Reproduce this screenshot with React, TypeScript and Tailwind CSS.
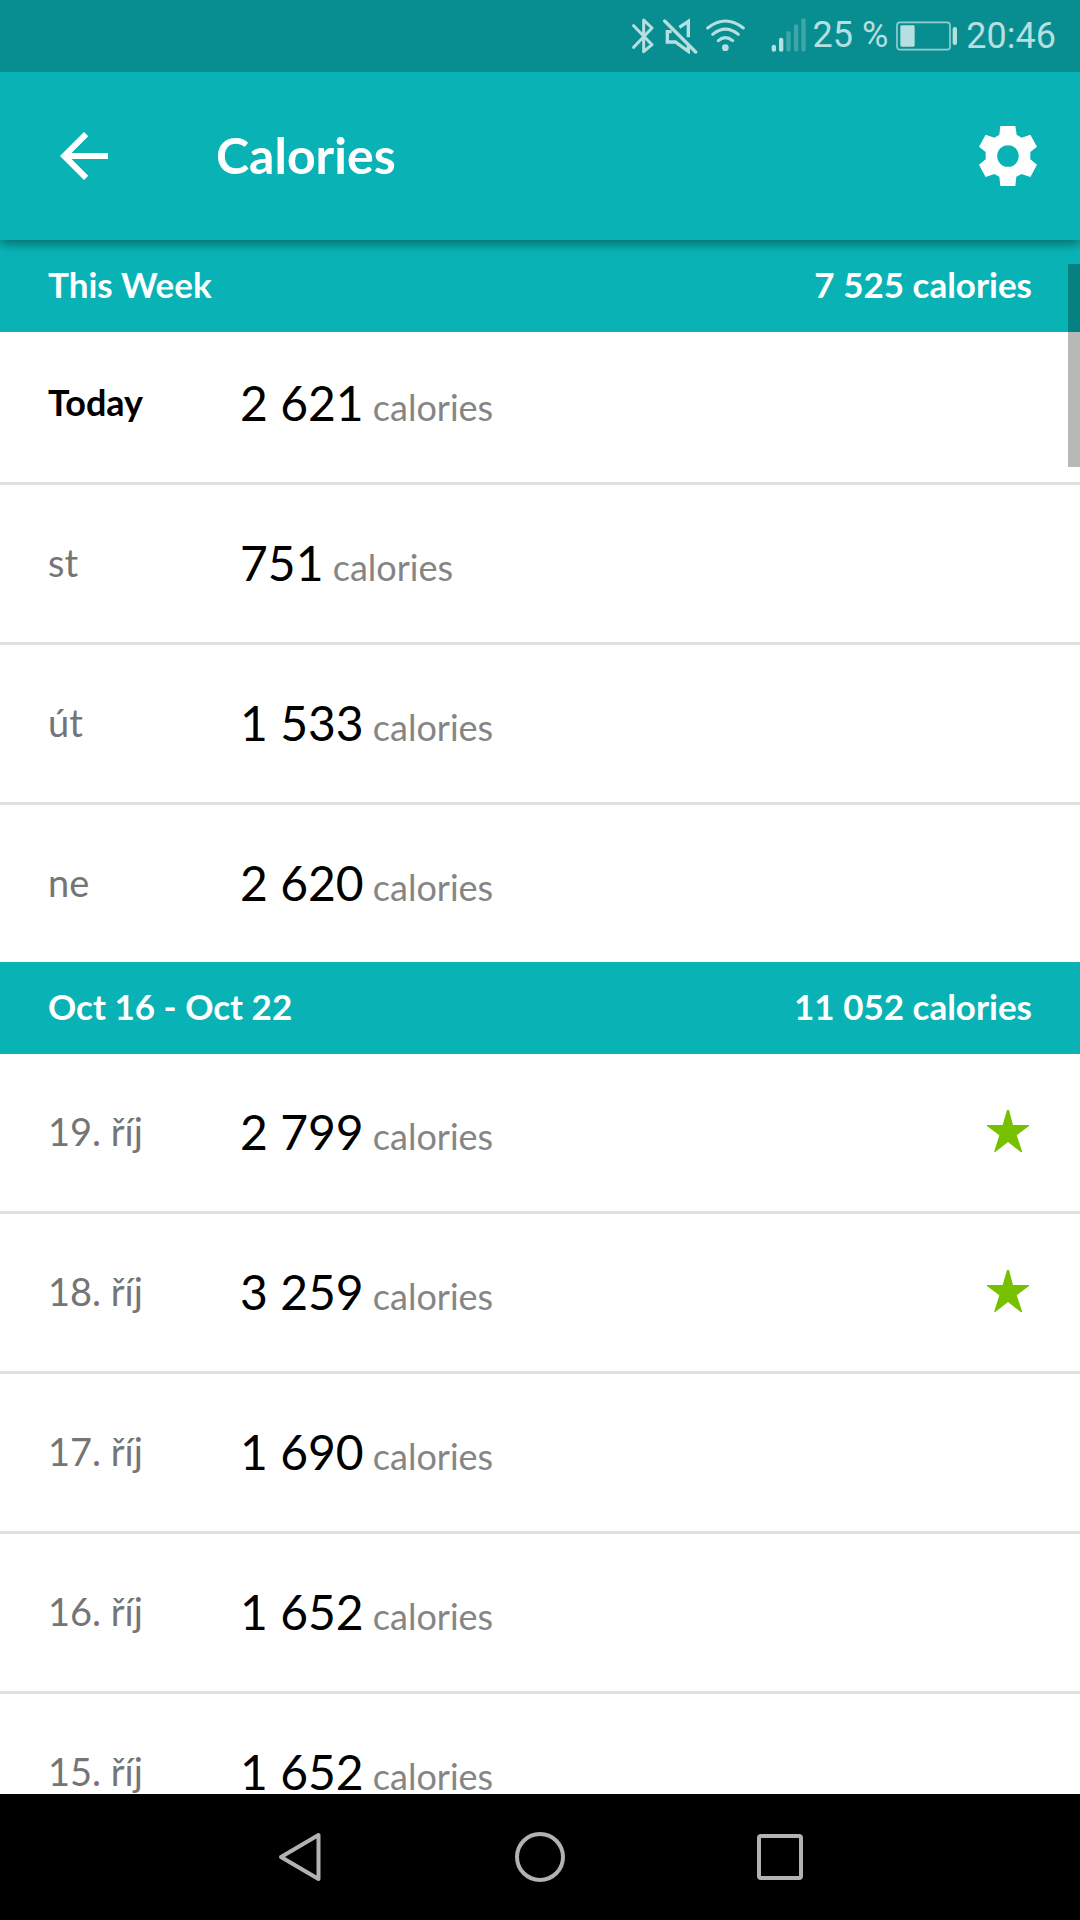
type Day = { label: string; value: string; today?: boolean; goal?: boolean };

type Week = { title: string; total: string; days: Day[] };

const WEEKS: Week[] = [
  {
    title: "This Week",
    total: "7 525 calories",
    days: [
      { label: "Today", value: "2 621", today: true },
      { label: "st", value: "751" },
      { label: "út", value: "1 533" },
      { label: "ne", value: "2 620" },
    ],
  },
  {
    title: "Oct 16 - Oct 22",
    total: "11 052 calories",
    days: [
      { label: "19. říj", value: "2 799", goal: true },
      { label: "18. říj", value: "3 259", goal: true },
      { label: "17. říj", value: "1 690" },
      { label: "16. říj", value: "1 652" },
      { label: "15. říj", value: "1 652" },
    ],
  },
];

function StatusBar() {
  return (
    <div className="relative z-30 flex h-[72px] shrink-0 items-center justify-end bg-[#088e90] pr-6 font-['Roboto',sans-serif] text-4xl text-[#b5dfe0]">
      <svg className="h-9 w-[22px]" viewBox="0 0 66 108" fill="none" stroke="currentColor" strokeWidth="9" strokeLinejoin="round" strokeLinecap="round">
        <path d="M5 23 60 80 35 101V6L60 30 5 88" />
      </svg>
      <svg className="ml-2 h-9 w-9" viewBox="0 0 108 108" fill="none" stroke="currentColor" strokeWidth="10">
        <path d="M8 9 101 102" strokeLinecap="round" />
        <path d="M52 28 79 10V58M29 41H16V72H40L79 100V80" />
      </svg>
      <svg className="ml-2 h-9 w-[39px]" viewBox="0 0 117 108" fill="none" stroke="currentColor" strokeWidth="9" strokeLinecap="round">
        <path d="M5 30Q58-12 112 30M20 49Q58 18 97 49M37 68Q58 50 80 68" />
        <circle cx="58" cy="89" r="10" fill="currentColor" stroke="none" />
      </svg>
      <svg className="ml-[26px] h-9 w-9" viewBox="0 0 108 108" fill="currentColor">
        <rect x="2" y="80" width="13" height="21" rx="6" />
        <rect x="24" y="59" width="13" height="42" rx="6" />
        <g opacity="0.3">
          <rect x="46" y="39" width="13" height="62" rx="6" />
          <rect x="69" y="19" width="13" height="82" rx="6" />
          <rect x="91" y="1" width="13" height="100" rx="6" />
        </g>
      </svg>
      <span className="ml-1.5 pb-0.5">25 %</span>
      <svg className="ml-2 h-[30px] w-[62px]" viewBox="0 0 186 90" fill="currentColor">
        <rect x="3" y="4" width="159" height="82" rx="9" fill="none" stroke="currentColor" strokeWidth="5" opacity="0.8" />
        <rect x="13" y="13" width="43" height="64" rx="4" />
        <rect x="170" y="18" width="13" height="54" rx="6" />
      </svg>
      <span className="ml-2">20:46</span>
    </div>
  );
}

function AppBar() {
  return (
    <header className="relative z-20 flex h-[168px] shrink-0 items-center bg-[#09b3b5] pr-[42px] pl-[60px] text-white shadow-[0_4px_10px_rgba(0,0,0,0.4)]">
      <button type="button" aria-label="Back">
        <svg className="size-12" viewBox="4 4 16 16" fill="currentColor">
          <path d="M20 11H7.83l5.59-5.59L12 4l-8 8 8 8 1.41-1.41L7.83 13H20v-2z" />
        </svg>
      </button>
      <h1 className="ml-[108px] flex-1 pb-0.5 text-[50px] leading-[60px] font-bold">Calories</h1>
      <button type="button" aria-label="Settings">
        <svg className="size-[60px]" viewBox="0 0 180 180" fill="currentColor" fillRule="evenodd">
          <path d="M67 0H112L116 26 131 35 157 26 177 62 157 78V100L177 116 157 153 131 144 115 152 112 180H67L64 152 49 144 23 153 3 116 23 100V78L3 62 23 26 49 35 64 26ZM90 57.500a32.500 32.500 0 1 0 0 65 32.500 32.500 0 1 0 0-65Z" />
        </svg>
      </button>
    </header>
  );
}

function DayRow({ day }: { day: Day }) {
  return (
    <li className="flex h-40 items-center border-b-[3px] border-[#e0e0e0] px-12 pb-[3px] last:h-[157px] last:border-b-0">
      <span className={day.today ? "w-48 text-[36px] font-bold text-black" : "w-48 text-[38px] text-[#757575]"}>
        {day.label}
      </span>
      <span className="flex-1 pt-0.5 text-[36px] text-[#858585]">
        <span className="text-[48px] text-black">{day.value}</span> calories
      </span>
      {day.goal && (
        <svg className="mr-[3px] size-[42px]" viewBox="0 0 126 126" fill="#77c000" role="img" aria-label="Goal reached">
          <path d="M60 0H66L78 45H126V48L89 76 105 123V126H101L63 96 25 126H22V123L37 76 0 48V45H47Z" />
        </svg>
      )}
    </li>
  );
}

function WeekSection({ week, pinned }: { week: Week; pinned: boolean }) {
  return (
    <section>
      <h2
        className={`relative z-10 flex h-[92px] items-center justify-between bg-[#09b3b5] px-12 pb-1 text-[35px] font-bold text-white ${
          pinned ? "-mb-[7px]" : ""
        }`}
      >
        <span>{week.title}</span>
        <span>{week.total}</span>
      </h2>
      <ul>
        {week.days.map((day) => (
          <DayRow key={day.label} day={day} />
        ))}
      </ul>
    </section>
  );
}

function NavBar() {
  return (
    <nav className="flex h-[126px] shrink-0 items-center justify-center bg-black text-[#b2b2b2]">
      <button type="button" aria-label="Back" className="flex w-60 justify-center">
        <svg className="size-[50px]" viewBox="0 0 50 50" fill="none" stroke="currentColor" strokeWidth="4" strokeLinejoin="round">
          <path d="M43.500 3V47L6 25Z" />
        </svg>
      </button>
      <button type="button" aria-label="Home" className="flex w-60 justify-center">
        <span className="size-[50px] rounded-full border-4 border-current" />
      </button>
      <button type="button" aria-label="Recent apps" className="flex w-60 justify-center">
        <span className="size-[46px] rounded-sm border-4 border-current" />
      </button>
    </nav>
  );
}

export default function App() {
  return (
    <div className="flex h-screen flex-col bg-white font-['Lato',sans-serif]">
      <StatusBar />
      <AppBar />
      <main className="relative min-h-0 flex-1 overflow-hidden">
        {WEEKS.map((week, i) => (
          <WeekSection key={week.title} week={week} pinned={i === 0} />
        ))}
        <div className="absolute top-6 right-0 z-10 h-[203px] w-3 bg-black/28" />
      </main>
      <NavBar />
    </div>
  );
}
